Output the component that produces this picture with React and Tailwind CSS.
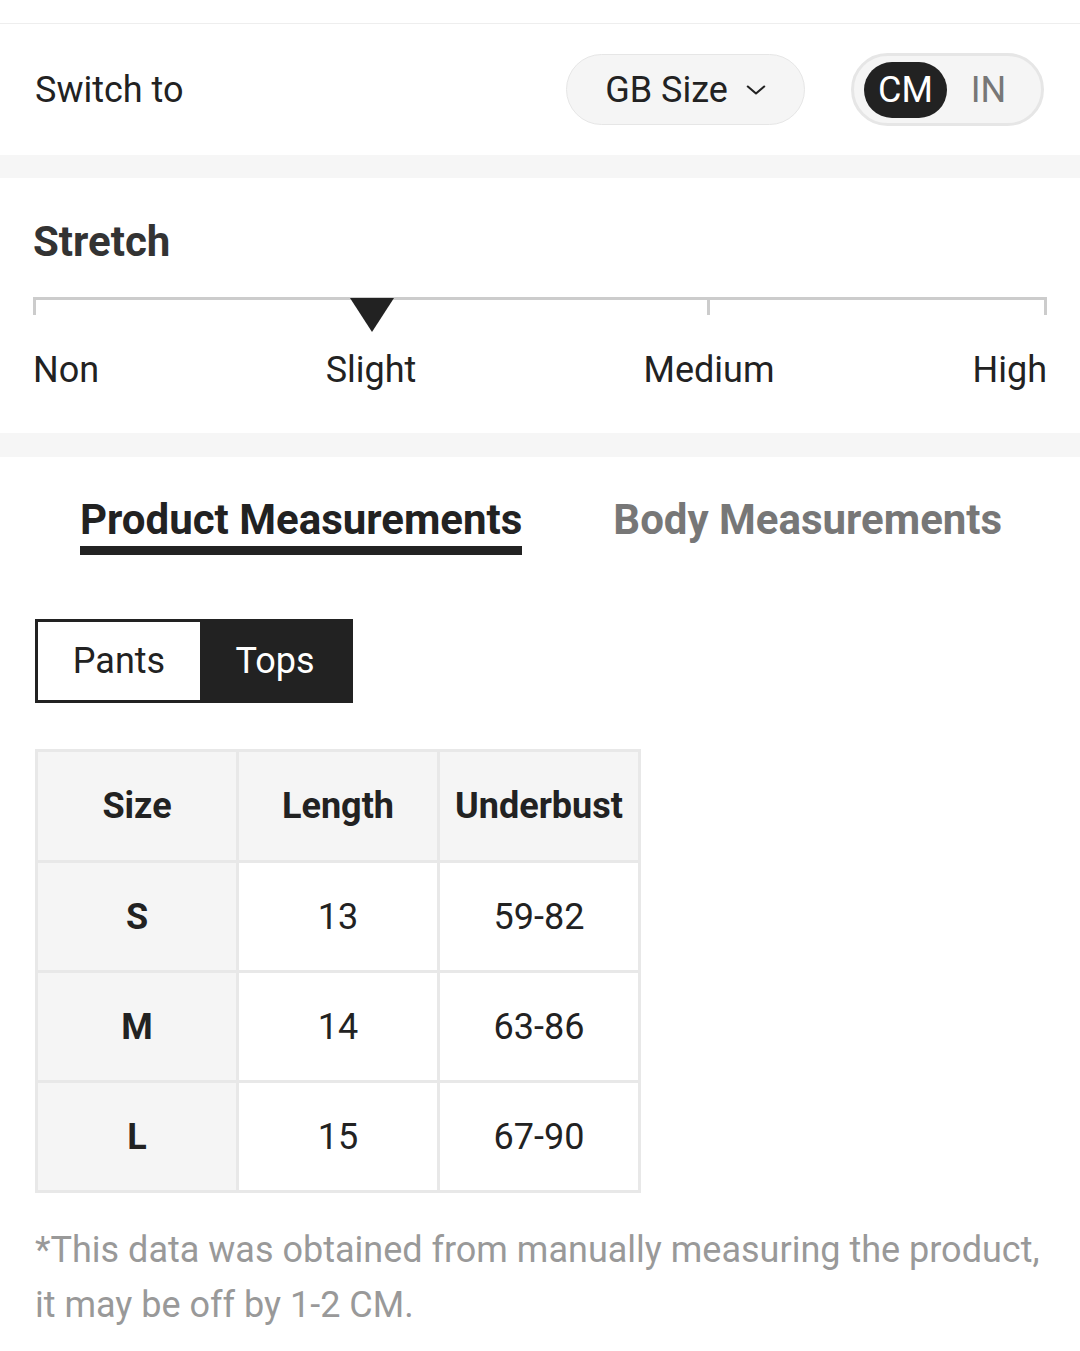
import React, { useState } from 'react';

const rows = [
  { size: 'S', length: '13', underbust: '59-82' },
  { size: 'M', length: '14', underbust: '63-86' },
  { size: 'L', length: '15', underbust: '67-90' },
];

const Chevron = () => (
  <svg width="28" height="28" viewBox="0 0 24 24" fill="none" stroke="#222" strokeWidth="1.8" strokeLinecap="round" strokeLinejoin="round">
    <path d="m5 9 7 6 7-6" />
  </svg>
);

const StretchScale = () => (
  <div className="mt-[31px]">
    {/* bar with ticks */}
    <div className="relative h-[18px] border-t-[3px] border-l-[3px] border-r-[3px] border-[#cccccc]">
      <div className="absolute left-[66.6%] -top-[3px] w-[3px] h-[18px] bg-[#cccccc]" />
      <div className="absolute left-[33.3%] -top-[2px] -translate-x-1/2 w-0 h-0 border-l-[22px] border-r-[22px] border-t-[34px] border-l-transparent border-r-transparent border-t-[#222222]" />
    </div>
    <div className="grid grid-cols-6 mt-[33px] text-[36px] leading-[44px] text-[#222]">
      <div className="text-left">Non</div>
      <div className="col-span-2 text-center">Slight</div>
      <div className="col-span-2 text-center">Medium</div>
      <div className="text-right">High</div>
    </div>
  </div>
);

export default function App() {
  const [unit, setUnit] = useState('CM');
  const [tab, setTab] = useState('product');
  const [kind, setKind] = useState('Tops');

  return (
    <div className="w-[1080px] bg-white font-['Roboto',sans-serif] text-[#222]">
      <div className="h-[24px] border-b border-[#eeeeee]" />

      {/* switch row */}
      <div className="h-[131px] flex items-center pl-[35px] pr-[36px]">
        <div className="text-[36px] leading-[44px] flex-1">Switch to</div>
        <button className="w-[239px] h-[71px] rounded-full bg-[#f5f5f5] border border-[#e6e6e6] flex items-center justify-center gap-[14px] text-[36px] pl-[4px]">
          <span>GB Size</span>
          <Chevron />
        </button>
        <div className="ml-[46px] w-[193px] h-[73px] rounded-full bg-[#f5f5f5] border-[3px] border-[#e6e6e6] flex items-center pl-[10px]">
          {['CM', 'IN'].map((u) => (
            <button
              key={u}
              onClick={() => setUnit(u)}
              className={
                unit === u
                  ? 'h-[56px] w-[83px] rounded-full bg-[#222] text-white text-[36px] flex items-center justify-center'
                  : 'h-[56px] w-[83px] rounded-full text-[#777] text-[36px] flex items-center justify-center'
              }
            >
              {u}
            </button>
          ))}
        </div>
      </div>

      <div className="h-[23px] bg-[#f6f6f6]" />

      {/* stretch */}
      <div className="px-[33px] pt-[40px] pb-[41px]">
        <h2 className="text-[42px] leading-[48px] font-bold text-[#333]">Stretch</h2>
        <StretchScale />
      </div>

      <div className="h-[24px] bg-[#f6f6f6]" />

      {/* tabs */}
      <div className="flex pl-[80px] gap-[91px] pt-[39px]">
        <button onClick={() => setTab('product')} className="flex flex-col items-stretch">
          <span className={`text-[42px] leading-[48px] font-bold ${tab === 'product' ? 'text-[#222]' : 'text-[#777]'}`}>Product Measurements</span>
          <span className={`mt-[2px] h-[9px] ${tab === 'product' ? 'bg-[#222]' : 'bg-transparent'}`} />
        </button>
        <button onClick={() => setTab('body')} className="flex flex-col items-stretch">
          <span className={`text-[42px] leading-[48px] font-bold ${tab === 'body' ? 'text-[#222]' : 'text-[#777]'}`}>Body Measurements</span>
          <span className={`mt-[2px] h-[9px] ${tab === 'body' ? 'bg-[#222]' : 'bg-transparent'}`} />
        </button>
      </div>

      <div className="px-[35px]">
        {/* pants / tops */}
        <div className="mt-[64px] flex w-[318px] h-[84px] border-[3px] border-[#222]">
          {['Pants', 'Tops'].map((k) => (
            <button
              key={k}
              onClick={() => setKind(k)}
              className={
                (k === 'Pants' ? 'w-[162px] ' : 'flex-1 ') +
                (kind === k
                  ? 'bg-[#222] text-white text-[36px] flex items-center justify-center'
                  : 'bg-white text-[#222] text-[36px] flex items-center justify-center')
              }
            >
              {k}
            </button>
          ))}
        </div>

        {/* table */}
        <div className="mt-[46px] w-[606px] border-l-[3px] border-t-[3px] border-[#e8e8e8]">
          <div className="grid grid-cols-3 h-[111px] bg-[#f5f5f5] text-[36px] font-bold">
            <div className="flex items-center justify-center border-r-[3px] border-b-[3px] border-[#e8e8e8]">Size</div>
            <div className="flex items-center justify-center border-r-[3px] border-b-[3px] border-[#e8e8e8]">Length</div>
            <div className="flex items-center justify-center border-r-[3px] border-b-[3px] border-[#e8e8e8]">Underbust</div>
          </div>
          {rows.map((r) => (
            <div key={r.size} className="grid grid-cols-3 h-[110px] text-[36px]">
              <div className="flex items-center justify-center bg-[#f5f5f5] font-bold border-r-[3px] border-b-[3px] border-[#e8e8e8]">{r.size}</div>
              <div className="flex items-center justify-center border-r-[3px] border-b-[3px] border-[#e8e8e8]">{r.length}</div>
              <div className="flex items-center justify-center border-r-[3px] border-b-[3px] border-[#e8e8e8]">{r.underbust}</div>
            </div>
          ))}
        </div>

        <p className="mt-[30px] pb-[20px] text-[36px] leading-[55px] text-[#999]">
          *This data was obtained from manually measuring the product, it may be off by 1-2 CM.
        </p>
      </div>
    </div>
  );
}
